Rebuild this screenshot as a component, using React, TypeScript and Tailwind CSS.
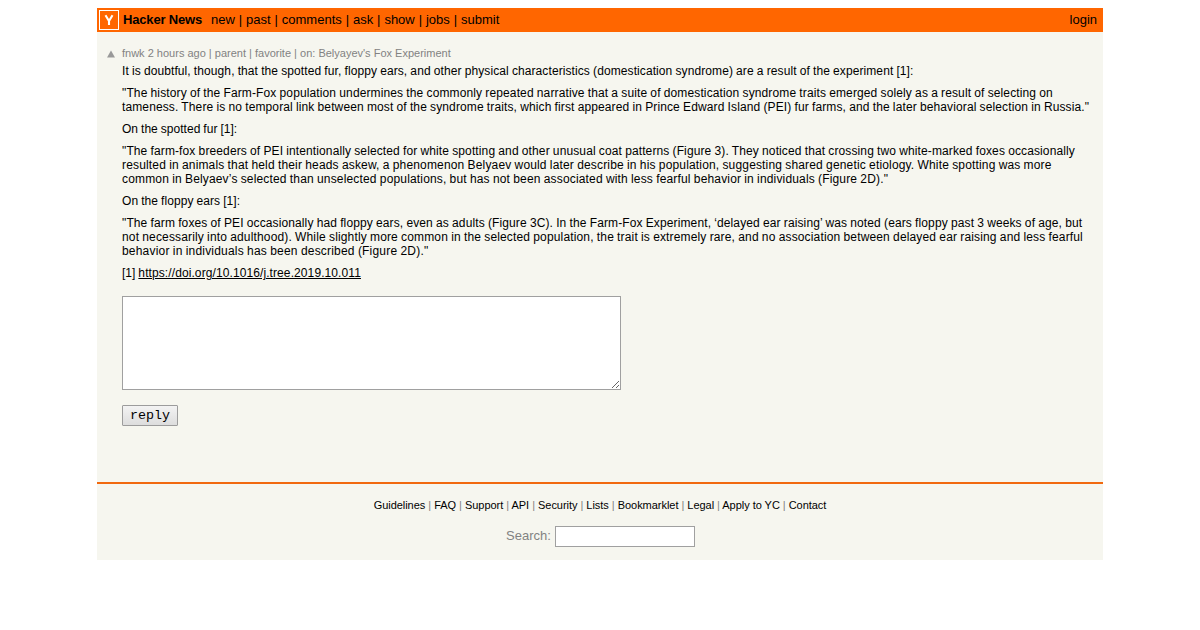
import { Fragment } from "react";

const navLinks = ["new", "past", "comments", "ask", "show", "jobs", "submit"];

const footerLinks = [
  "Guidelines",
  "FAQ",
  "Support",
  "API",
  "Security",
  "Lists",
  "Bookmarklet",
  "Legal",
  "Apply to YC",
  "Contact",
];

// Each paragraph is a list of lines: [text, tracking]
const paragraphs = [
  [
    ["It is doubtful, though, that the spotted fur, floppy ears, and other physical characteristics (domestication syndrome) are a result of the experiment [1]:", "tracking-[0.093px]"],
  ],
  [
    ["\"The history of the Farm-Fox population undermines the commonly repeated narrative that a suite of domestication syndrome traits emerged solely as a result of selecting on", "tracking-[0.123px]"],
    ["tameness. There is no temporal link between most of the syndrome traits, which first appeared in Prince Edward Island (PEI) fur farms, and the later behavioral selection in Russia.\"", "tracking-[0.121px]"],
  ],
  [["On the spotted fur [1]:", "tracking-[0.02px]"]],
  [
    ["\"The farm-fox breeders of PEI intentionally selected for white spotting and other unusual coat patterns (Figure 3). They noticed that crossing two white-marked foxes occasionally", "tracking-[0.118px]"],
    ["resulted in animals that held their heads askew, a phenomenon Belyaev would later describe in his population, suggesting shared genetic etiology. White spotting was more", "tracking-[0.161px]"],
    ["common in Belyaev’s selected than unselected populations, but has not been associated with less fearful behavior in individuals (Figure 2D).\"", "tracking-[0.16px]"],
  ],
  [["On the floppy ears [1]:", "tracking-[0.06px]"]],
  [
    ["\"The farm foxes of PEI occasionally had floppy ears, even as adults (Figure 3C). In the Farm-Fox Experiment, ‘delayed ear raising’ was noted (ears floppy past 3 weeks of age, but", "tracking-[0.119px]"],
    ["not necessarily into adulthood). While slightly more common in the selected population, the trait is extremely rare, and no association between delayed ear raising and less fearful", "tracking-[0.15px]"],
    ["behavior in individuals has been described (Figure 2D).\"", "tracking-[0.195px]"],
  ],
];

const Header = () => (
  <header className="flex h-6 items-center bg-[#ff6600] pl-0.5 pr-1.5 text-[13px] leading-4 text-black">
    <a href="#" className="flex h-5 w-5 shrink-0 border border-white">
      <svg viewBox="0 0 18 18" className="h-[18px] w-[18px]" fill="none" stroke="white" strokeWidth="2.1">
        <path d="M5.5 4.2 L9 10 L12.5 4.2 M9 9.5 V14" />
      </svg>
    </a>
    <nav className="ml-1 flex grow whitespace-pre">
      <a href="#" className="w-[88px] font-bold tracking-[-0.17px]">Hacker News</a>
      <span className="[word-spacing:0.29px]">
        {navLinks.map((link, i) => (
          <Fragment key={link}>
            {i > 0 && " | "}
            <a href="#">{link}</a>
          </Fragment>
        ))}
      </span>
    </nav>
    <a href="#">login</a>
  </header>
);

const Comment = () => (
  <main className="flex h-[450px] pl-[10px] pr-2 pt-[15px]">
    <div className="w-[15px] shrink-0 pt-0.5">
      <svg viewBox="0 0 10 10" className="h-[10px] w-2" preserveAspectRatio="none">
        <path d="M5 1.5 L10 8.5 H0 Z" fill="#999999" />
      </svg>
    </div>
    <div className="min-w-0 grow">
      <div className="h-[17px] text-[11px] leading-[13px] text-[#828282]">
        <a href="#">fnwk</a> <a href="#">2 hours ago</a> | <a href="#">parent</a> | <a href="#">favorite</a> | on:{" "}
        <a href="#">Belyayev's Fox Experiment</a>
      </div>
      <div className="space-y-2 whitespace-nowrap text-[12px] leading-[14px] text-black [word-spacing:-0.33px]">
        {paragraphs.map((lines) => (
          <p key={lines[0][0]}>
            {lines.map(([text, tracking]) => (
              <span key={text} className={`block ${tracking}`}>{text}</span>
            ))}
          </p>
        ))}
        <p>
          [1] <a href="#" className="tracking-[0.095px] underline">https://doi.org/10.1016/j.tree.2019.10.011</a>
        </p>
      </div>
      <form className="mt-4">
        <textarea className="block h-[94px] w-[499px] resize border border-[#a0a0a0] bg-white p-0.5 font-['Liberation_Mono',monospace] text-[13.333px]" />
        <button
          type="button"
          className="mt-[15px] block h-[21px] w-14 rounded-[1px] border border-[#9c9c9c] bg-linear-to-b from-[#f3f3f3] to-[#dddddd] font-['Liberation_Mono',monospace] text-[13.333px] leading-[17px] text-black"
        >
          reply
        </button>
      </form>
    </div>
  </main>
);

const Footer = () => (
  <footer className="h-[78px] border-t-2 border-[#f1690f] pt-[14px] text-center text-[#828282]">
    <div className="text-[11px] leading-[14px] tracking-[-0.035px]">
      {footerLinks.map((link, i) => (
        <Fragment key={link}>
          {i > 0 && " | "}
          <a href="#" className="text-black">{link}</a>
        </Fragment>
      ))}
    </div>
    <label className="mt-[14px] flex items-start justify-center gap-1 pl-px text-[13px] leading-[19px]">
      Search:
      <input type="text" className="h-[21px] w-[140px] border border-[#a0a0a0] bg-white px-0.5 font-['Liberation_Mono',monospace]" />
    </label>
  </footer>
);

const App = () => {
  return (
    <div className="bg-white pt-2 font-['Liberation_Sans',Arial,sans-serif]">
      <div className="mx-auto w-[1006px] bg-[#f6f6ef]">
        <Header />
        <Comment />
        <Footer />
      </div>
    </div>
  );
};

export default App;
